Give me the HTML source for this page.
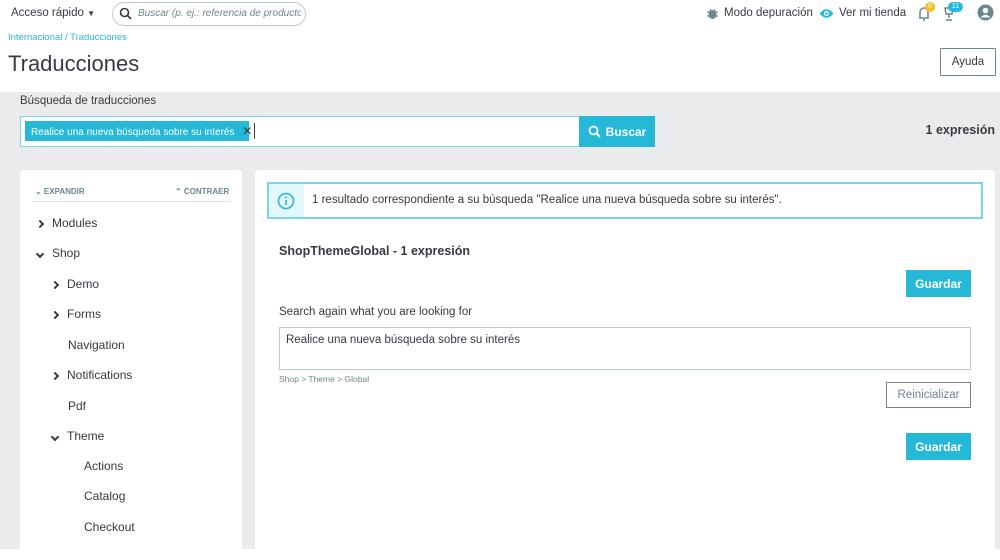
<!DOCTYPE html>
<html><head><meta charset="utf-8"><style>
*{box-sizing:border-box;margin:0;padding:0}
body{width:1000px;height:549px;overflow:hidden;font-family:"Liberation Sans",sans-serif;color:#363a41;background:#fff;position:relative;font-size:12px}
.a{position:absolute;white-space:nowrap}
.gray{position:absolute;left:0;top:92px;width:1000px;height:457px;background:#eaebec}
.panel{position:absolute;background:#fff;border-radius:4px}
.btn{position:absolute;background:#25b9d7;color:#fff;font-weight:bold;font-size:12px;display:flex;align-items:center;justify-content:center}
.tree div{position:absolute;font-size:12px;color:#363a41}
.chev{display:inline-block;width:6px;height:6px;border-right:2px solid #363a41;border-bottom:2px solid #363a41;transform:rotate(-45deg)}
.chd{transform:rotate(45deg)}
</style></head><body>
<div class="a" style="left:11px;top:7px;font-size:11.5px">Acceso rápido <span style="font-size:8px">▼</span></div>
<div class="a" style="left:112px;top:2px;width:194px;height:24px;border:1px solid #bbcdd2;border-radius:12px"></div>
<svg class="a" style="left:119px;top:7px" width="13" height="13" viewBox="0 0 13 13"><circle cx="5.5" cy="5.5" r="4" fill="none" stroke="#363a41" stroke-width="1.6"/><path d="M8.5 8.5l3.5 3.5" stroke="#363a41" stroke-width="1.8"/></svg>
<div class="a" style="left:138px;top:8px;font-size:10px;font-style:italic;color:#6c868e;width:163px;overflow:hidden">Buscar (p. ej.: referencia de producto, nom</div>
<svg class="a" style="left:706px;top:7px" width="13" height="13" viewBox="0 0 13 13"><ellipse cx="6.5" cy="7.5" rx="4" ry="4.5" fill="#6c868e"/><path d="M1 5h11M1 9h11M4 2l1 2M9 2l-1 2" stroke="#6c868e" stroke-width="1.3"/></svg>
<div class="a" style="left:724px;top:7px;font-size:11.5px">Modo depuración</div>
<svg class="a" style="left:819px;top:8px" width="15" height="11" viewBox="0 0 15 11"><path d="M0.5 5.5Q7.5 -3 14.5 5.5Q7.5 14 0.5 5.5z" fill="#25b9d7"/><circle cx="7.5" cy="5.5" r="2.5" fill="#fff"/><circle cx="7.5" cy="5.5" r="1.3" fill="#25b9d7"/></svg>
<div class="a" style="left:839px;top:7px;font-size:11.5px">Ver mi tienda</div>
<svg class="a" style="left:917px;top:5px" width="16" height="16" viewBox="0 0 16 16"><path d="M3 13V7a4 4 0 0 1 8 0v6zM2 13h10M6 15h2" fill="none" stroke="#6c868e" stroke-width="1.5"/></svg>
<div class="a" style="left:925px;top:2px;width:10px;height:10px;border-radius:5px;background:#fbbb22;color:#fff;font-size:7px;text-align:center;line-height:10px">8</div>
<svg class="a" style="left:942px;top:5px" width="16" height="17" viewBox="0 0 16 17"><path d="M3 3h8l-1 6H4zM7 9v4M4 15h6" fill="none" stroke="#6c868e" stroke-width="1.5"/></svg>
<div class="a" style="left:948px;top:2px;width:15px;height:10px;border-radius:5px;background:#25b9d7;color:#fff;font-size:7px;text-align:center;line-height:10px">11</div>
<svg class="a" style="left:977px;top:4px" width="17" height="17" viewBox="0 0 17 17"><circle cx="8.5" cy="8.5" r="8" fill="#6c868e"/><circle cx="8.5" cy="6.5" r="2.8" fill="#fff"/><path d="M3.5 13.5Q8.5 8 13.5 13.5" fill="#fff"/></svg>
<div class="a" style="left:8px;top:32px;font-size:9.5px;color:#25b9d7">Internacional / Traducciones</div>
<div class="a" style="left:8px;top:51px;font-size:22px;color:#363a41">Traducciones</div>
<div class="a" style="left:940px;top:48px;width:56px;height:28px;border:1px solid #6c868e;display:flex;align-items:center;justify-content:center;font-size:11.5px;border-radius:1px">Ayuda</div>
<div class="gray"></div>
<div class="a" style="left:20px;top:95px;font-size:11.5px">Búsqueda de traducciones</div>
<div class="a" style="left:20px;top:116px;width:560px;height:31px;background:#fff;border:1px solid #7cd5e7"></div>
<div class="a" style="left:25px;top:121px;width:224px;height:20px;background:#25b9d7;color:#fff;font-size:10px;line-height:20px;padding-left:6px">Realice una nueva búsqueda sobre su interés <span style="margin-left:5px;color:#363a41;font-size:12px">✕</span></div>
<div class="a" style="left:254px;top:123px;width:1px;height:16px;background:#363a41"></div>
<div class="btn" style="left:579px;top:116px;width:76px;height:31px;font-size:12px"><svg width="13" height="13" viewBox="0 0 13 13" style="margin-right:5px"><circle cx="5.5" cy="5.5" r="4" fill="none" stroke="#fff" stroke-width="1.8"/><path d="M8.5 8.5l3.5 3.5" stroke="#fff" stroke-width="2"/></svg>Buscar</div>
<div class="a" style="right:5px;top:123px;font-size:12.5px;font-weight:bold">1 expresión</div>
<div class="panel" style="left:20px;top:170px;width:222px;height:390px"></div>
<div class="a" style="left:35px;top:187px;font-size:8px;font-weight:bold;color:#6c868e">⌄ EXPANDIR</div>
<div class="a" style="left:175px;top:187px;font-size:8px;font-weight:bold;color:#6c868e">⌃ CONTRAER</div>
<div class="a" style="left:32px;top:201px;width:199px;height:1px;background:#dfe3e5"></div>
<div class="tree">
<div style="left:37px;top:216px"><span class="chev"></span><span style="margin-left:9px">Modules</span></div>
<div style="left:37px;top:246px"><span class="chev chd"></span><span style="margin-left:9px">Shop</span></div>
<div style="left:52px;top:277px"><span class="chev"></span><span style="margin-left:9px">Demo</span></div>
<div style="left:52px;top:307px"><span class="chev"></span><span style="margin-left:9px">Forms</span></div>
<div style="left:68px;top:338px">Navigation</div>
<div style="left:52px;top:368px"><span class="chev"></span><span style="margin-left:9px">Notifications</span></div>
<div style="left:68px;top:399px">Pdf</div>
<div style="left:52px;top:429px"><span class="chev chd"></span><span style="margin-left:9px">Theme</span></div>
<div style="left:84px;top:459px">Actions</div>
<div style="left:84px;top:489px">Catalog</div>
<div style="left:84px;top:520px">Checkout</div>
</div>
<div class="panel" style="left:255px;top:170px;width:740px;height:390px"></div>
<div class="a" style="left:267px;top:182px;width:716px;height:37px;border:2px solid #7cd5e7;background:#fff"></div>
<div class="a" style="left:269px;top:184px;width:35px;height:33px;background:#e3f6f9"></div>
<svg class="a" style="left:277px;top:192px" width="18" height="18" viewBox="0 0 18 18"><circle cx="9" cy="9" r="7.5" fill="none" stroke="#25b9d7" stroke-width="1.6"/><circle cx="9" cy="5.5" r="1" fill="#25b9d7"/><path d="M9 8v5" stroke="#25b9d7" stroke-width="1.7"/></svg>
<div class="a" style="left:312px;top:194px;font-size:11.5px">1 resultado correspondiente a su búsqueda "Realice una nueva búsqueda sobre su interés".</div>
<div class="a" style="left:279px;top:244px;font-size:12.5px;font-weight:bold">ShopThemeGlobal - 1 expresión</div>
<div class="btn" style="left:906px;top:270px;width:65px;height:27px">Guardar</div>
<div class="a" style="left:279px;top:306px;font-size:11.5px">Search again what you are looking for</div>
<div class="a" style="left:279px;top:327px;width:692px;height:43px;border:1px solid #bbcdd2;padding:6px 6px;font-size:11.5px">Realice una nueva búsqueda sobre su interés</div>
<div class="a" style="left:279px;top:374px;font-size:8.5px;color:#6c868e">Shop &gt; Theme &gt; Global</div>
<div class="a" style="left:886px;top:382px;width:85px;height:26px;border:1px solid #6c868e;display:flex;align-items:center;justify-content:center;font-size:11.5px;color:#6c868e">Reinicializar</div>
<div class="btn" style="left:906px;top:433px;width:65px;height:27px">Guardar</div>
</body></html>
